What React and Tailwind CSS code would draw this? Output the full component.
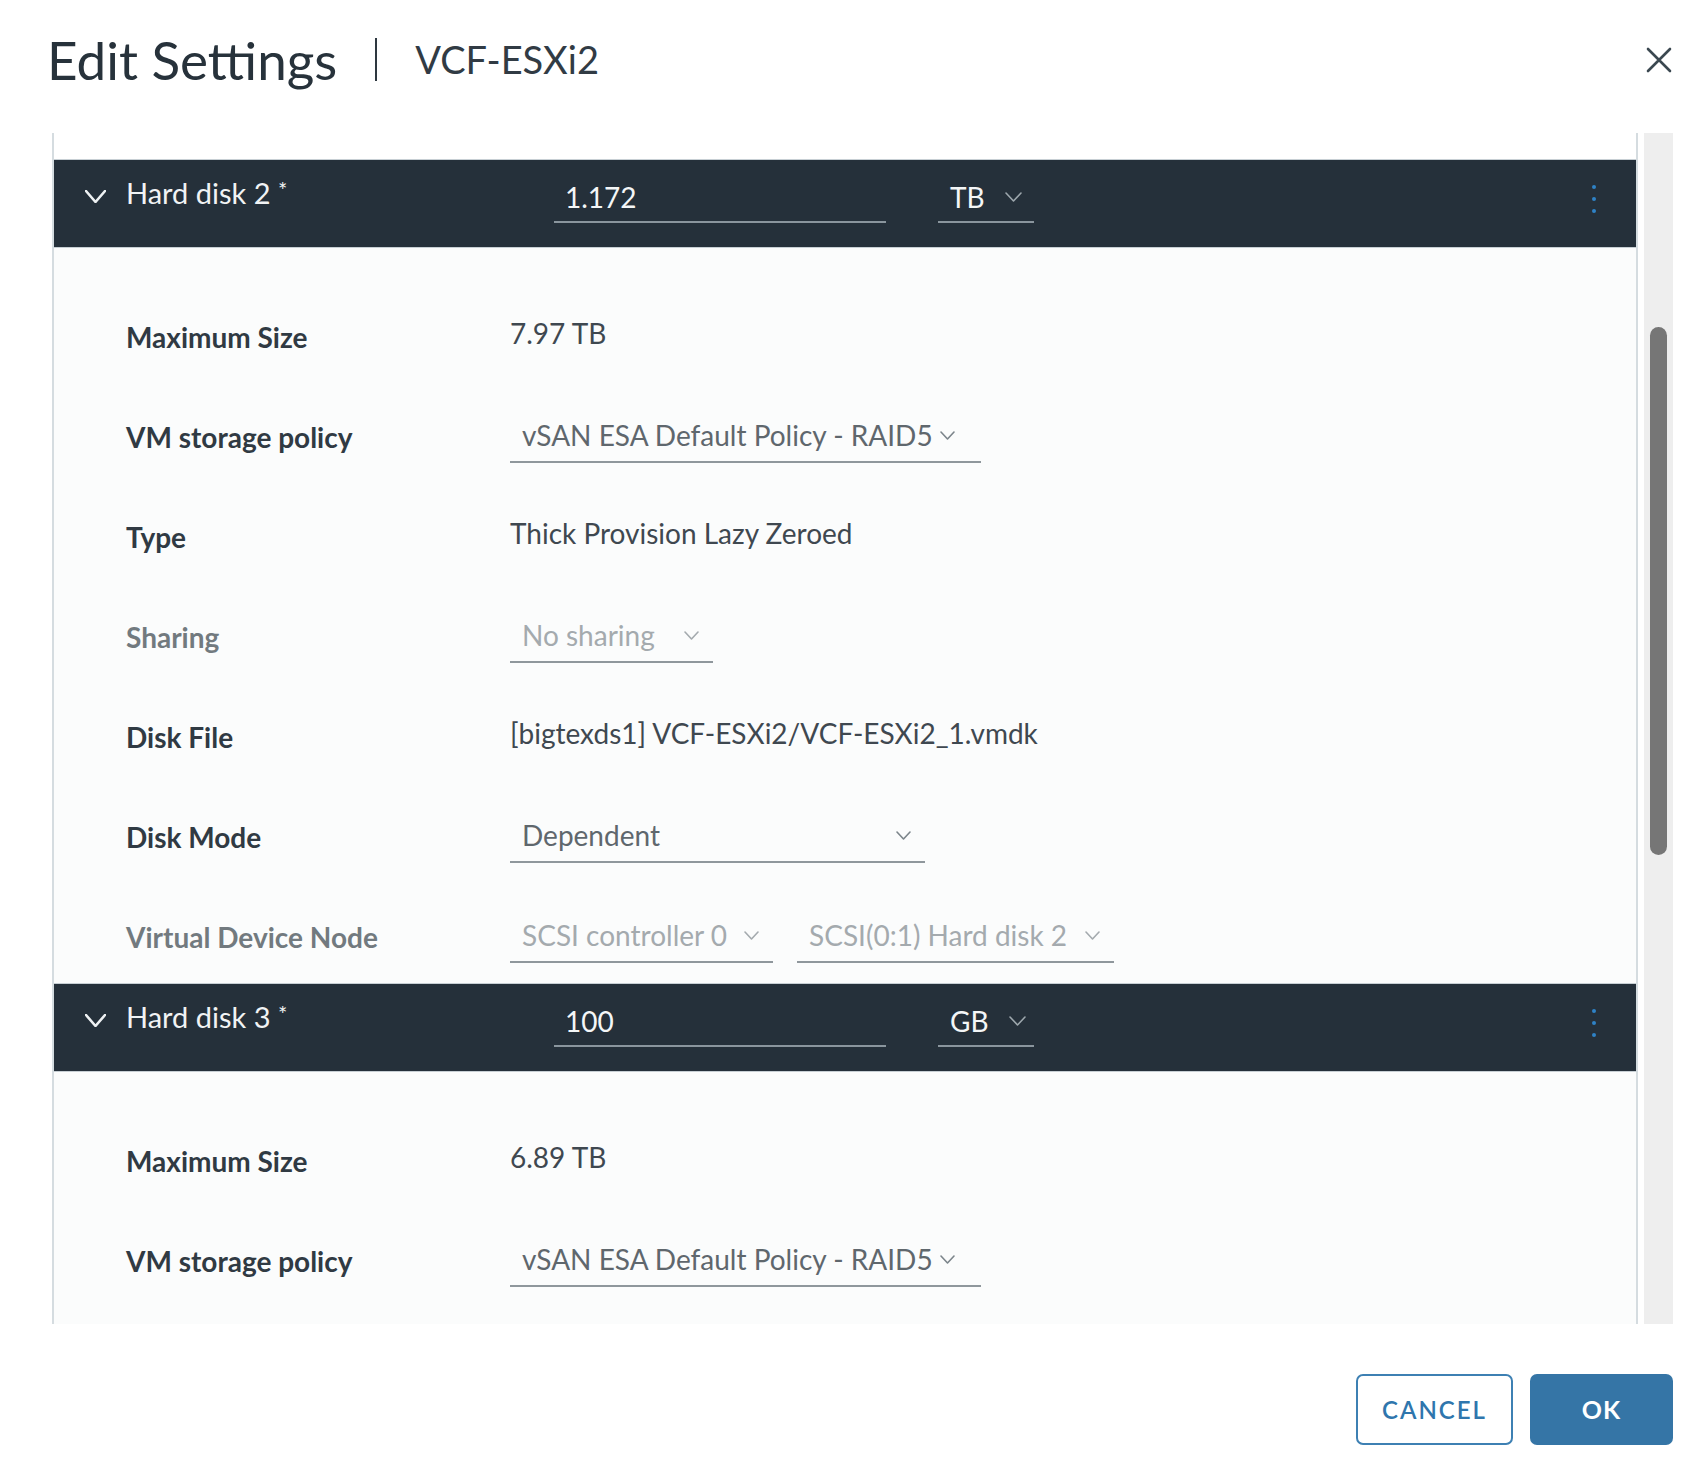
import React from "react"

const Chevron = ({ className = "", color = "#8d969c", w = 14, h = 8, stroke = 1.6 }) => (
  <svg width={w} height={h} viewBox={`0 0 ${w} ${h}`} className={className} fill="none">
    <path d={`M1 1 L${w / 2} ${h - 1} L${w - 1} 1`} stroke={color} strokeWidth={stroke} strokeLinecap="round" strokeLinejoin="round" />
  </svg>
)

const Select = ({ value, width, muted, chevronAt }) => (
  <div
    className="flex items-center h-[54px] border-b-2 border-[#8f979c] pl-[12px] mt-[6px]"
    style={{ width }}
  >
    <span className={`text-[28px] whitespace-nowrap ${muted ? "text-[#a4aaae]" : "text-[#5f676d]"}`}>{value}</span>
    <Chevron className="ml-auto" w={15} h={9} color={muted ? "#a4aaae" : "#7c858b"} />
    <span style={{ width: chevronAt }} />
  </div>
)

const Row = ({ label, muted, children }) => (
  <div className="flex items-center h-[100px] pl-[72px]">
    <div className={`w-[384px] text-[28px] font-bold pt-[7px] ${muted ? "text-[#727a7f]" : "text-[#303a43]"}`}>{label}</div>
    <div className="flex items-center gap-[24px]">{children}</div>
  </div>
)

const Value = ({ children }) => (
  <span className="text-[28px] text-[#3f4850] whitespace-nowrap">{children}</span>
)

const DiskHeader = ({ name, size, unit }) => (
  <div className="flex items-center h-[89px] bg-[#25303a] border-t border-b border-[#c7cfd4]">
    <Chevron className="ml-[31px] mb-[14px]" w={21} h={13} stroke={2.6} color="#eef1f3" />
    <div className="w-[448px] pl-[20px] pb-[21px] text-[29px] text-[#f1f3f4]">
      {name} <span className="relative -top-[6px] text-[22px]">*</span>
    </div>
    <div className="w-[332px] h-[44px] -mt-[6px] flex items-center pl-[11px] pb-[6px] border-b-2 border-[#8a959d]">
      <span className="text-[28px] text-[#f4f6f7]">{size}</span>
    </div>
    <div className="w-[96px] h-[44px] -mt-[6px] ml-[52px] flex items-center pl-[12px] pb-[6px] border-b-2 border-[#8a959d]">
      <span className="text-[28px] text-[#f4f6f7]">{unit}</span>
      <Chevron className="ml-[20px]" w={17} h={10} color="#9da7ad" />
    </div>
    <div className="ml-auto mr-[40px] flex flex-col gap-[8px] pb-[10px]">
      <span className="w-[4px] h-[4px] rounded-full bg-[#2f82c6]" />
      <span className="w-[4px] h-[4px] rounded-full bg-[#2f82c6]" />
      <span className="w-[4px] h-[4px] rounded-full bg-[#2f82c6]" />
    </div>
  </div>
)

export default function App() {
  return (
    <div className="w-[1708px] h-[1470px] bg-white font-['Lato','Liberation_Sans',sans-serif] flex flex-col">
      {/* title bar */}
      <div className="flex items-center h-[133px] shrink-0 pl-[47px] pr-[36px] pb-[15px]">
        <h1 className="text-[53px] text-[#27323b] leading-none">Edit Settings</h1>
        <span className="w-[2px] h-[43px] bg-[#2e3840] ml-[38px] mr-[38px]" />
        <span className="text-[38px] text-[#313b44] leading-none">VCF-ESXi2</span>
        <svg width="26" height="26" viewBox="0 0 26 26" className="ml-auto mt-[2px]">
          <path d="M2 2 L24 24 M24 2 L2 24" stroke="#3b4850" strokeWidth="2.6" strokeLinecap="round" />
        </svg>
      </div>

      {/* scrolling content */}
      <div className="flex h-[1191px] shrink-0 ml-[52px] mr-[35px]">
        <div className="flex-1 border-l-2 border-r-2 border-[#d5dce0] bg-[#fbfcfc] overflow-hidden">
          <div className="h-[26px] bg-white" />
          <DiskHeader name="Hard disk 2" size="1.172" unit="TB" />
          <div className="pt-[35px]">
            <Row label="Maximum Size">
              <Value>7.97 TB</Value>
            </Row>
            <Row label="VM storage policy">
              <Select value="vSAN ESA Default Policy - RAID5" width="471px" chevronAt="26px" />
            </Row>
            <Row label="Type">
              <Value>Thick Provision Lazy Zeroed</Value>
            </Row>
            <Row label="Sharing" muted>
              <Select value="No sharing" width="203px" muted chevronAt="14px" />
            </Row>
            <Row label="Disk File">
              <Value>[bigtexds1] VCF-ESXi2/VCF-ESXi2_1.vmdk</Value>
            </Row>
            <Row label="Disk Mode">
              <Select value="Dependent" width="415px" chevronAt="14px" />
            </Row>
            <Row label="Virtual Device Node" muted>
              <Select value="SCSI controller 0" width="263px" muted chevronAt="14px" />
              <Select value="SCSI(0:1) Hard disk 2" width="317px" muted chevronAt="14px" />
            </Row>
          </div>
          <DiskHeader name="Hard disk 3" size="100" unit="GB" />
          <div className="pt-[35px]">
            <Row label="Maximum Size">
              <Value>6.89 TB</Value>
            </Row>
            <Row label="VM storage policy">
              <Select value="vSAN ESA Default Policy - RAID5" width="471px" chevronAt="26px" />
            </Row>
          </div>
        </div>
        <div className="w-[29px] ml-[6px] bg-[#eeeeee] pt-[194px] flex justify-center">
          <div className="w-[17px] h-[528px] rounded-full bg-[#767676]" />
        </div>
      </div>

      {/* footer */}
      <div className="flex justify-end items-center gap-[17px] pr-[35px] pt-[50px]">
        <button className="w-[157px] h-[71px] rounded-[7px] border-2 border-[#3d80b3] text-[#2f76ad] text-[24px] font-semibold tracking-[2px]">
          CANCEL
        </button>
        <button className="w-[143px] h-[71px] rounded-[7px] bg-[#3575a6] text-white text-[25px] font-bold tracking-[1px]">
          OK
        </button>
      </div>
    </div>
  )
}
